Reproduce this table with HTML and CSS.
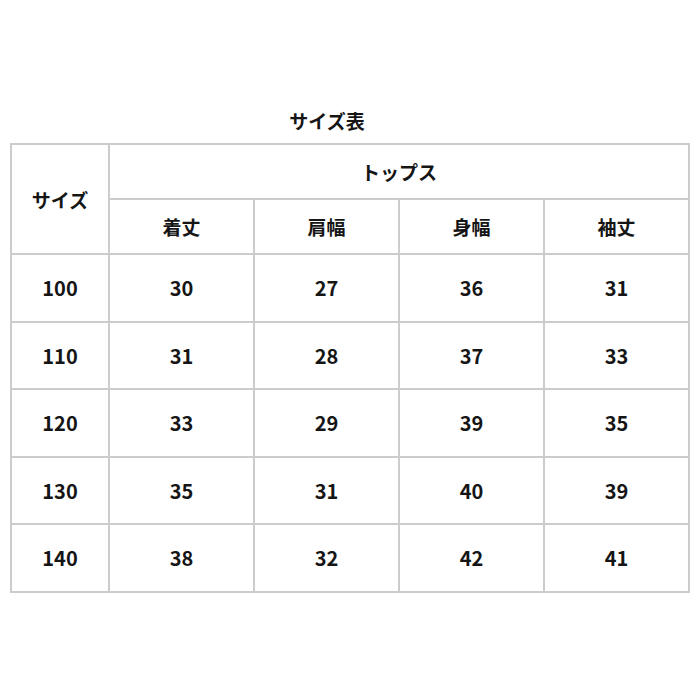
FILE: index.html
```html
<!DOCTYPE html>
<html lang="ja">
<head>
<meta charset="utf-8">
<link rel="stylesheet" href="styles.css">
</head>
<body>
<div class="page">
  <div class="title">サイズ表</div>
  <table class="size-table">
    <colgroup>
      <col class="c-size">
      <col class="c-val"><col class="c-val"><col class="c-val"><col class="c-val">
    </colgroup>
    <thead>
      <tr class="hrow"><th rowspan="2">サイズ</th><th colspan="4">トップス</th></tr>
      <tr class="hrow"><th>着丈</th><th>肩幅</th><th>身幅</th><th>袖丈</th></tr>
    </thead>
    <tbody>
      <tr><td>100</td><td>30</td><td>27</td><td>36</td><td>31</td></tr>
      <tr><td>110</td><td>31</td><td>28</td><td>37</td><td>33</td></tr>
      <tr><td>120</td><td>33</td><td>29</td><td>39</td><td>35</td></tr>
      <tr><td>130</td><td>35</td><td>31</td><td>40</td><td>39</td></tr>
      <tr><td>140</td><td>38</td><td>32</td><td>42</td><td>41</td></tr>
    </tbody>
  </table>
</div>
</body>
</html>
```
FILE: styles.css
```css
html, body {
  margin: 0;
  padding: 0;
  background: #ffffff;
}
.page {
  width: 700px;
  height: 700px;
  padding-top: 107px;
  box-sizing: border-box;
  font-family: "Noto Sans CJK JP", "Noto Sans", sans-serif;
  font-weight: 700;
  color: #151515;
}
.title {
  width: 700px;
  padding-right: 46px;
  box-sizing: border-box;
  text-align: center;
  font-size: 19px;
  line-height: 28px;
  height: 36px;
}
.size-table {
  margin-left: 10px;
  border-collapse: collapse;
  table-layout: fixed;
  width: 678px;
}
.c-size { width: 98px; }
.c-val { width: 145px; }
.size-table th,
.size-table td {
  border: 2px solid #cccccc;
  text-align: center;
  vertical-align: middle;
  padding: 0;
  font-size: 19px;
  font-weight: 700;
}
.size-table .hrow th { height: 53px; }
.size-table tbody td { height: 65.5px; font-size: 20px; }
```
